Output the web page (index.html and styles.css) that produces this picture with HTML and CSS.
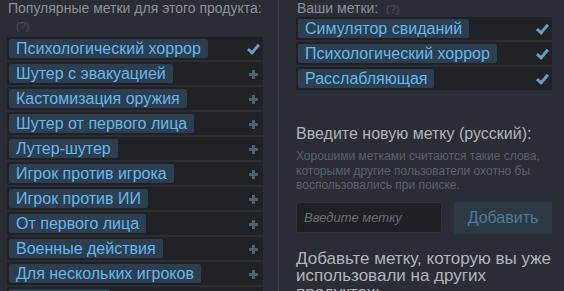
FILE: index.html
```html
<!DOCTYPE html>
<html lang="ru">
<head>
    <meta charset="UTF-8">
    <title>Метки</title>
    <link rel="stylesheet" href="styles.css">
</head>
<body>
    <div class="tags-dialog">
        <!-- Popular tags -->
        <div class="popular">
            <div class="caption">Популярные метки для этого продукта:</div>
            <div class="help help-block">(?)</div>
            <div class="tag-list">
                <div class="tag-row"><span class="tag">Психологический хоррор</span><span class="icon check"></span></div>
                <div class="tag-row"><span class="tag">Шутер с эвакуацией</span><span class="icon plus"></span></div>
                <div class="tag-row"><span class="tag">Кастомизация оружия</span><span class="icon plus"></span></div>
                <div class="tag-row"><span class="tag">Шутер от первого лица</span><span class="icon plus"></span></div>
                <div class="tag-row"><span class="tag">Лутер-шутер</span><span class="icon plus"></span></div>
                <div class="tag-row"><span class="tag">Игрок против игрока</span><span class="icon plus"></span></div>
                <div class="tag-row"><span class="tag">Игрок против ИИ</span><span class="icon plus"></span></div>
                <div class="tag-row"><span class="tag">От первого лица</span><span class="icon plus"></span></div>
                <div class="tag-row"><span class="tag">Военные действия</span><span class="icon plus"></span></div>
                <div class="tag-row"><span class="tag">Для нескольких игроков</span><span class="icon plus"></span></div>
                <div class="tag-row"><span class="tag">Кооператив</span><span class="icon plus"></span></div>
            </div>
        </div>

        <!-- Your tags -->
        <div class="yours">
            <div class="caption">Ваши метки: &nbsp;<span class="help">(?)</span></div>
            <div class="tag-list">
                <div class="tag-row"><span class="tag">Симулятор свиданий</span><span class="icon check"></span></div>
                <div class="tag-row"><span class="tag">Психологический хоррор</span><span class="icon check"></span></div>
                <div class="tag-row"><span class="tag">Расслабляющая</span><span class="icon check"></span></div>
            </div>

            <div class="new-tag">
                <h3>Введите новую метку (русский):</h3>
                <p class="hint">Хорошими метками считаются такие слова, которыми другие пользователи охотно бы воспользовались при поиске.</p>
                <div class="new-tag-form">
                    <input type="text" placeholder="Введите метку">
                    <button type="button">Добавить</button>
                </div>
            </div>

            <h3 class="used">Добавьте метку, которую вы уже использовали на других продуктах:</h3>
        </div>
    </div>
</body>
</html>
```

FILE: styles.css
```css
body {
    margin: 0;
    background: #2a2d33;
    font-family: "Liberation Sans", Arial, sans-serif;
    color: #8b929a;
    overflow: hidden;
}
.tags-dialog {
    display: flex;
    height: 291px;
}
.popular {
    width: 272px;
    padding-left: 7px;
    border-right: 1px solid #3a3e45;
}
.yours {
    flex: 1;
    padding-left: 17px;
    padding-right: 12px;
}
.caption {
    font-size: 14px;
    line-height: 16px;
    height: 16px;
    padding-left: 1px;
}
.help {
    font-size: 11px;
    color: #4b5159;
}
.help-block {
    padding: 3px 0 0 9px;
    line-height: 14px;
    height: 18px;
}
.tag-list {
    display: flex;
    flex-direction: column;
    gap: 2px;
}
.popular .tag-list {
    width: 256px;
}
.yours .tag-list {
    margin-top: 1px;
}
.tag-row {
    display: flex;
    align-items: center;
    justify-content: space-between;
    height: 23px;
    background: #1f2125;
    padding: 0 4px 0 2px;
}
.tag {
    background: #2c3e4f;
    color: #66b8ea;
    font-size: 16px;
    line-height: 19px;
    padding: 0 7px;
    border-radius: 2px;
    white-space: nowrap;
}
.icon {
    position: relative;
    width: 12px;
    height: 12px;
}
.check::after {
    content: "";
    position: absolute;
    left: 3px;
    top: -1px;
    width: 4px;
    height: 9px;
    border-right: 3px solid #6a9bc4;
    border-bottom: 3px solid #6a9bc4;
    transform: rotate(40deg);
}
.plus::before,
.plus::after {
    content: "";
    position: absolute;
    background: #486175;
}
.plus::before {
    left: 2px;
    top: 5px;
    width: 9px;
    height: 3px;
}
.plus::after {
    left: 5px;
    top: 2px;
    width: 3px;
    height: 9px;
}
.new-tag h3 {
    margin: 34px 0 0;
    font-weight: normal;
    font-size: 16px;
    line-height: 20px;
    color: #b0b6bc;
}
.hint {
    margin: 5px 0 0;
    font-size: 12px;
    line-height: 14.5px;
    color: #5a626b;
}
.new-tag-form {
    display: flex;
    gap: 12px;
    margin-top: 9px;
}
.new-tag-form input {
    width: 146px;
    height: 31px;
    box-sizing: border-box;
    background: #1d1f23;
    border: 1px solid #2f3238;
    border-radius: 3px;
    padding: 0 7px;
    font-family: inherit;
    font-size: 13px;
    font-style: italic;
    color: #ccc;
}
.new-tag-form input::placeholder {
    color: #6a7078;
}
.new-tag-form button {
    width: 98px;
    height: 32px;
    background: #2b3944;
    color: #4f7a9a;
    border: none;
    border-radius: 2px;
    font-family: inherit;
    font-size: 16px;
}
.used {
    margin: 16px 0 0;
    font-weight: normal;
    font-size: 17px;
    line-height: 17px;
    color: #b0b6bc;
}
```
